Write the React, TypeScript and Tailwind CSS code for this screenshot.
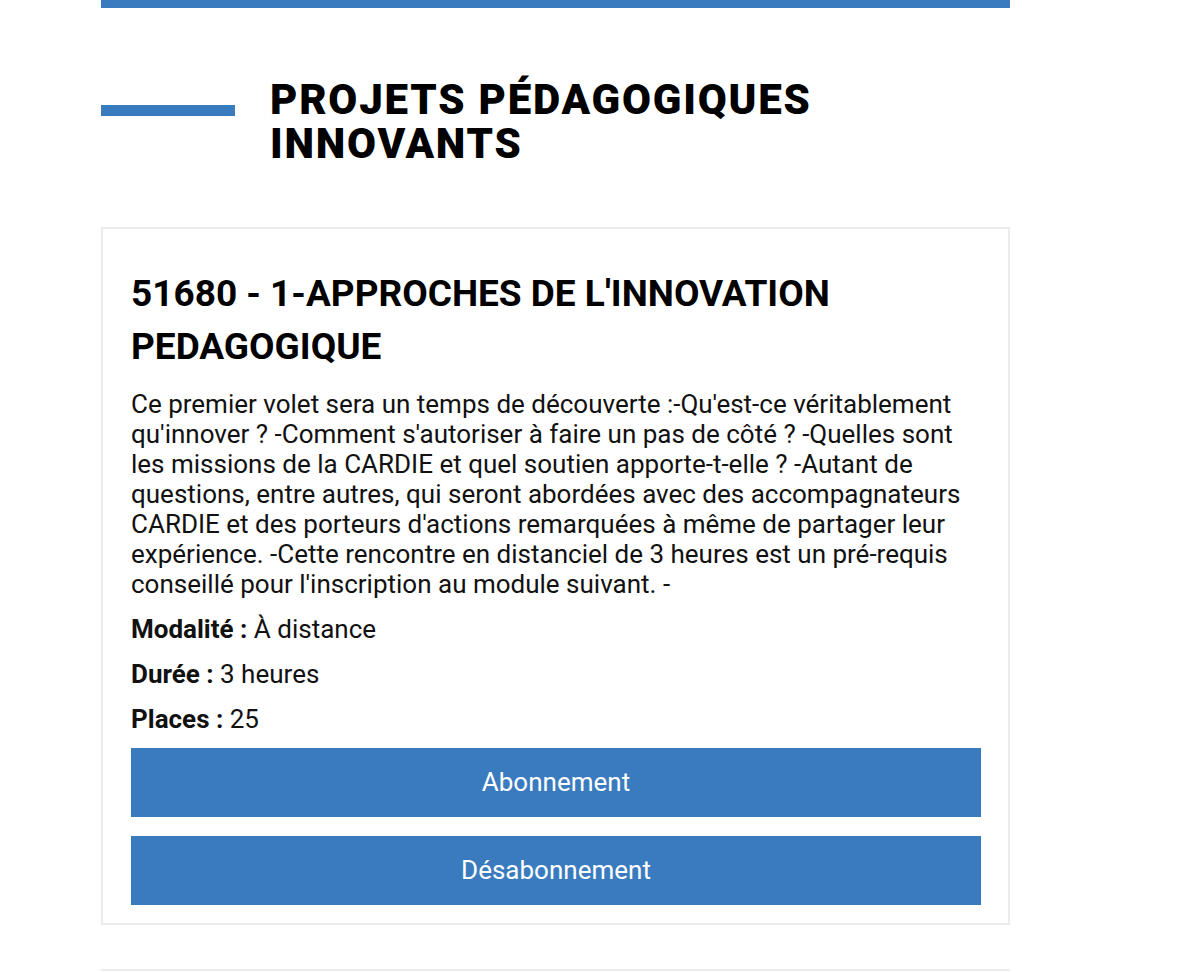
import React from 'react';

const sessions = [
  {
    id: '51680',
    title: "1-APPROCHES DE L'INNOVATION PEDAGOGIQUE",
    description:
      "Ce premier volet sera un temps de découverte :-Qu'est-ce véritablement qu'innover ? -Comment s'autoriser à faire un pas de côté ? -Quelles sont les missions de la CARDIE et quel soutien apporte-t-elle ? -Autant de questions, entre autres, qui seront abordées avec des accompagnateurs CARDIE et des porteurs d'actions remarquées à même de partager leur expérience. -Cette rencontre en distanciel de 3 heures est un pré-requis conseillé pour l'inscription au module suivant. -",
    modalite: 'À distance',
    duree: '3 heures',
    places: 25,
  },
];

function App() {
  return (
    <div className="min-h-screen bg-white font-['Roboto','Liberation_Sans',sans-serif] text-[#111]">
      <div className="w-[909px] ml-[101px]">
        {/* Top accent bar */}
        <div className="h-[8px] bg-[#3a7bbf]" />

        {/* Section heading */}
        <div className="mt-[70px] flex items-start gap-[35px]">
          <div className="mt-[27px] h-[11px] w-[134px] shrink-0 bg-[#3a7bbf]" />
          <h2 className="text-[42px] font-black uppercase leading-[44px] tracking-[1.8px] text-black">
            Projets pédagogiques
            <br />
            innovants
          </h2>
        </div>

        {/* Session cards */}
        <div className="mt-[61px] flex flex-col gap-[44px]">
          {sessions.map((s) => (
            <div key={s.id} className="border-2 border-[#ececec] pl-[28px] pr-[27px] pt-[38px] pb-[18px]">
              <h3 className="text-[37px] font-bold leading-[53px] text-black">{`${s.id} - ${s.title}`}</h3>
              <p className="mt-[16px] text-[26px] leading-[30px]">{s.description}</p>
              <div className="mt-[15px] flex flex-col gap-[15px] text-[26px] leading-[30px]">
                <p>
                  <span className="font-bold">Modalité :</span> {s.modalite}
                </p>
                <p>
                  <span className="font-bold">Durée :</span> {s.duree}
                </p>
                <p>
                  <span className="font-bold">Places :</span> {s.places}
                </p>
              </div>
              <div className="mt-[14px] flex flex-col gap-[19px]">
                <button className="h-[69px] w-full bg-[#3a7bbf] text-[26px] text-white">Abonnement</button>
                <button className="h-[69px] w-full bg-[#3a7bbf] text-[26px] text-white">Désabonnement</button>
              </div>
            </div>
          ))}
          <div className="h-[20px] border-t-2 border-[#ececec]" />
        </div>
      </div>
    </div>
  );
}

export default App;
